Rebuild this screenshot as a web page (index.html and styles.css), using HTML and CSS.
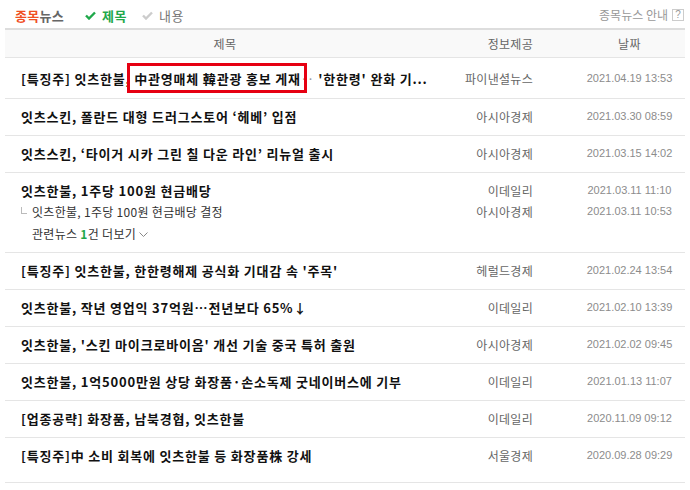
FILE: index.html
```html
<!DOCTYPE html>
<html>
	<head>
		<meta charset="UTF-8">
		<title>종목뉴스</title>
		<link rel="stylesheet" href="styles.css">
	</head>
	<body>
		<div class="news">
			<div class="news-top">
				<h2 class="logo"><em>종목</em>뉴스</h2>
				<ul class="tabs">
					<li class="on"><svg viewBox="0 0 11 9"><polyline points="1,4.5 4,7.5 10,1.5"/></svg>제목</li>
					<li><svg viewBox="0 0 11 9"><polyline points="1,4.5 4,7.5 10,1.5"/></svg>내용</li>
				</ul>
				<a href="#" class="guide">종목뉴스 안내 <span class="q">?</span></a>
			</div>
			<table class="list">
				<colgroup>
					<col class="c-tit">
					<col class="c-prov">
					<col class="c-date">
				</colgroup>
				<thead>
					<tr>
						<th>제목</th>
						<th class="prov">정보제공</th>
						<th>날짜</th>
					</tr>
				</thead>
				<tbody>
					<tr class="first">
						<td class="tit">[특징주] 잇츠한불, <span class="mark">中관영매체 韓관광 홍보 게재</span><span class="dots">‥</span> '한한령' 완화 기...</td>
						<td class="prov">파이낸셜뉴스</td>
						<td class="date">2021.04.19 13:53</td>
					</tr>
					<tr>
						<td class="tit">잇츠스킨, 폴란드 대형 드러그스토어 ‘헤베’ 입점</td>
						<td class="prov">아시아경제</td>
						<td class="date">2021.03.30 08:59</td>
					</tr>
					<tr>
						<td class="tit">잇츠스킨, ‘타이거 시카 그린 칠 다운 라인’ 리뉴얼 출시</td>
						<td class="prov">아시아경제</td>
						<td class="date">2021.03.15 14:02</td>
					</tr>
					<tr>
						<td class="tit">
							잇츠한불, 1주당 100원 현금배당
							<div class="sub"><span class="corner"></span>잇츠한불, 1주당 100원 현금배당 결정</div>
							<div class="more">관련뉴스 <b>1</b>건 더보기 <svg viewBox="0 0 9 5"><polyline points="0.5,0.5 4.5,4.5 8.5,0.5"/></svg></div>
						</td>
						<td class="prov">이데일리<div class="sub">아시아경제</div></td>
						<td class="date">2021.03.11 11:10<div class="sub">2021.03.11 10:53</div></td>
					</tr>
					<tr>
						<td class="tit">[특징주] 잇츠한불, 한한령해제 공식화 기대감 속 '주목'</td>
						<td class="prov">헤럴드경제</td>
						<td class="date">2021.02.24 13:54</td>
					</tr>
					<tr>
						<td class="tit">잇츠한불, 작년 영업익 37억원…전년보다 65%↓</td>
						<td class="prov">이데일리</td>
						<td class="date">2021.02.10 13:39</td>
					</tr>
					<tr>
						<td class="tit">잇츠한불, '스킨 마이크로바이옴' 개선 기술 중국 특허 출원</td>
						<td class="prov">아시아경제</td>
						<td class="date">2021.02.02 09:45</td>
					</tr>
					<tr>
						<td class="tit">잇츠한불, 1억5000만원 상당 화장품·손소독제 굿네이버스에 기부</td>
						<td class="prov">이데일리</td>
						<td class="date">2021.01.13 11:07</td>
					</tr>
					<tr>
						<td class="tit">[업종공략] 화장품, 남북경협, 잇츠한불</td>
						<td class="prov">이데일리</td>
						<td class="date">2020.11.09 09:12</td>
					</tr>
					<tr class="last">
						<td class="tit">[특징주]中 소비 회복에 잇츠한불 등 화장품株 강세</td>
						<td class="prov">서울경제</td>
						<td class="date">2020.09.28 09:29</td>
					</tr>
				</tbody>
			</table>
		</div>
	</body>
</html>
```

FILE: styles.css
```css
*{padding:0;margin:0;}
a{text-decoration: none;color: #333;}
ul li{list-style:none}
body{font-size:12px;font-family:"Noto Sans CJK KR","Noto Sans",sans-serif;color:#333;background:#fff;}
.news{width:680px;margin:0 5px;}
/* 상단 */
.news-top{display:flex;align-items:center;height:28px;padding:3px 1px 0 10px;box-sizing:border-box;}
.logo{font-size:13px;font-weight:bold;color:#666;letter-spacing:0.3px;line-height:17px;}
.logo em{font-style:normal;color:#f04e23;}
.tabs{display:flex;gap:15px;margin-left:21px;}
.tabs li{display:flex;align-items:center;gap:6px;font-size:13px;color:#777;line-height:17px;letter-spacing:0.5px;}
.tabs li.on{color:#1fa84a;font-weight:bold;}
.tabs svg{width:11px;height:9px;fill:none;stroke:#ccc;stroke-width:2.4;}
.tabs li.on svg{stroke:#1fa84a;}
.guide{margin-left:auto;color:#999;font-size:12px;display:flex;align-items:center;gap:4px;margin-top:-2px;}
.guide .q{width:10px;height:10px;border:1px solid #ccc;font-size:10px;line-height:10px;text-align:center;color:#999;font-family:"Liberation Sans",sans-serif;}
/* 목록 */
.list{width:100%;border-collapse:collapse;border-top:2px solid #ddd;table-layout:fixed;}
.c-tit{width:440px;}
.c-prov{width:129px;}
.c-date{width:111px;}
.list th{height:27px;padding:0;background:#f9f9f9;font-weight:normal;color:#666;font-size:12px;border-bottom:1px solid #e5e5e5;letter-spacing:0.5px;}
.list td{padding:9px 0 10px;border-bottom:1px solid #e5e5e5;line-height:17px;vertical-align:top;}
.list .prov{text-align:right;padding-right:41px;color:#666;letter-spacing:0.3px;}
.list td.tit{padding-left:16px;font-size:13px;font-weight:bold;color:#111;white-space:nowrap;letter-spacing:0.8px;}
.list td.date{text-align:center;color:#8c8c8c;font-family:"Liberation Sans",sans-serif;font-size:11px;letter-spacing:0;}
.list tr.first td{padding-top:12px;padding-bottom:11px;}
.list tr.last td{padding-bottom:18px;}
.list .sub{margin-top:4px;}
.tit .sub{font-size:12px;font-weight:normal;color:#333;display:flex;align-items:center;letter-spacing:0.3px;}
.corner{display:inline-block;width:5px;height:6px;border-left:1px solid #bbb;border-bottom:1px solid #bbb;margin:0 5px 3px 0;}
.tit .more{margin-top:5px;padding-left:11px;font-size:12px;font-weight:normal;color:#333;letter-spacing:0.3px;}
.more b{color:#1fa84a;}
.more svg{width:9px;height:5px;fill:none;stroke:#888;stroke-width:1;margin-bottom:2px;}
.dots{color:#999;font-weight:normal;}
/* 강조 표시 */
.mark{position:relative;}
.mark::after{content:"";position:absolute;left:-7px;right:-6px;top:-6px;bottom:-5px;border:3px solid #e60012;}
```
